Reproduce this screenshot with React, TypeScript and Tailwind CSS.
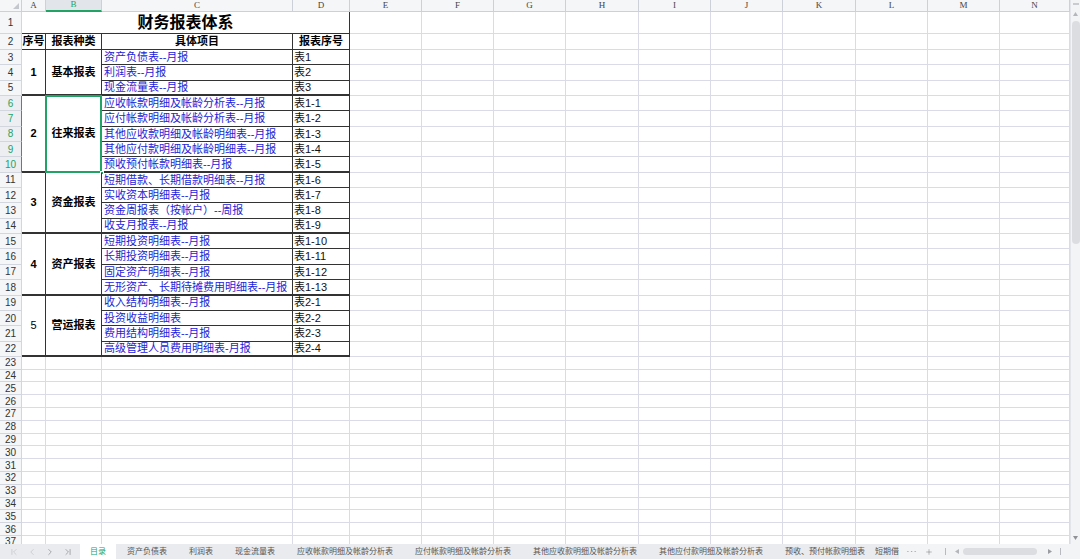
import { ChevronFirst, ChevronLast, ChevronLeft, ChevronRight, Plus } from "lucide-react";

const COLS = ["A", "B", "C", "D", "E", "F", "G", "H", "I", "J", "K", "L", "M", "N"];
const EMPTY = COLS.slice(4);

type Group = {
  num: string;
  name: string;
  numBold: boolean;
  span: string;
  items: [string, string][];
};

const GROUPS: Group[] = [
  {
    num: "1",
    name: "基本报表",
    numBold: true,
    span: "row-span-3",
    items: [
      ["资产负债表--月报", "表1"],
      ["利润表--月报", "表2"],
      ["现金流量表--月报", "表3"],
    ],
  },
  {
    num: "2",
    name: "往来报表",
    numBold: true,
    span: "row-span-5",
    items: [
      ["应收帐款明细及帐龄分析表--月报", "表1-1"],
      ["应付帐款明细及帐龄分析表--月报", "表1-2"],
      ["其他应收款明细及帐龄明细表--月报", "表1-3"],
      ["其他应付款明细及帐龄明细表--月报", "表1-4"],
      ["预收预付帐款明细表--月报", "表1-5"],
    ],
  },
  {
    num: "3",
    name: "资金报表",
    numBold: true,
    span: "row-span-4",
    items: [
      ["短期借款、长期借款明细表--月报", "表1-6"],
      ["实收资本明细表--月报", "表1-7"],
      ["资金周报表（按帐户）--周报", "表1-8"],
      ["收支月报表--月报", "表1-9"],
    ],
  },
  {
    num: "4",
    name: "资产报表",
    numBold: true,
    span: "row-span-4",
    items: [
      ["短期投资明细表--月报", "表1-10"],
      ["长期投资明细表--月报", "表1-11"],
      ["固定资产明细表--月报", "表1-12"],
      ["无形资产、长期待摊费用明细表--月报", "表1-13"],
    ],
  },
  {
    num: "5",
    name: "营运报表",
    numBold: false,
    span: "row-span-4",
    items: [
      ["收入结构明细表--月报", "表2-1"],
      ["投资收益明细表", "表2-2"],
      ["费用结构明细表--月报", "表2-3"],
      ["高级管理人员费用明细表-月报", "表2-4"],
    ],
  },
];

const TABS = [
  "资产负债表",
  "利润表",
  "现金流量表",
  "应收帐款明细及帐龄分析表",
  "应付帐款明细及帐龄分析表",
  "其他应收款明细及帐龄分析表",
  "其他应付款明细及帐龄分析表",
];

const light = "border-r border-b border-[#d9dce6]";
const dark = "border-r border-b border-[#333]";

function RowHead({ n, selected }: { n: number; selected?: boolean }) {
  return (
    <div
      className={
        selected
          ? "flex items-center justify-center bg-[#eceef1] border-r border-r-[#21a366] border-b border-b-[#d3d6df] text-[10px] text-[#21a366]"
          : "flex items-center justify-center bg-[#f5f6f8] border-r border-b border-[#d3d6df] text-[10px] text-[#333]"
      }
    >
      {n}
    </div>
  );
}

function Sheet() {
  const cells: React.ReactNode[] = [];

  // column header row
  cells.push(
    <div key="corner" className="relative bg-[#f5f6f8] border-r border-b border-[#cdd0d9]">
      <svg className="absolute right-[2px] bottom-[2px]" width="6" height="6" viewBox="0 0 6 6">
        <polygon points="6,0 6,6 0,6" fill="#c4c7cd" />
      </svg>
    </div>
  );
  COLS.forEach((c) =>
    cells.push(
      <div
        key={"h" + c}
        className={
          c === "B"
            ? "flex items-center justify-center bg-[#e2e5ea] border-r border-r-[#cdd0d9] border-b-2 border-b-[#21a366] font-['Liberation_Serif',serif] text-[9px] text-[#21a366]"
            : "flex items-center justify-center bg-[#f5f6f8] border-r border-b border-[#cdd0d9] font-['Liberation_Serif',serif] text-[9px] text-[#444]"
        }
      >
        {c}
      </div>
    )
  );

  // row 1: title
  cells.push(<RowHead key="r1" n={1} />);
  cells.push(
    <div
      key="title"
      className="col-span-4 flex items-center justify-center border-r border-b border-[#333] text-[16px] font-bold text-black"
    >
      财务报表体系
    </div>
  );
  EMPTY.forEach((c) => cells.push(<div key={"1" + c} className={light} />));

  // row 2: headings
  cells.push(<RowHead key="r2" n={2} />);
  ["序号", "报表种类", "具体项目", "报表序号"].forEach((t) =>
    cells.push(
      <div key={"2" + t} className={"flex items-center justify-center text-[11px] font-bold text-black " + dark}>
        {t}
      </div>
    )
  );
  EMPTY.forEach((c) => cells.push(<div key={"2" + c} className={light} />));

  // rows 3-22
  let r = 3;
  GROUPS.forEach((g, gi) => {
    g.items.forEach(([item, code], ii) => {
      const last = ii === g.items.length - 1;
      const sel = gi === 1;
      cells.push(<RowHead key={"r" + r} n={r} selected={sel} />);
      if (ii === 0) {
        cells.push(
          <div
            key={"a" + r}
            className={
              "flex items-center justify-center border-r border-b-2 border-[#333] text-[11px] text-black " +
              g.span +
              (g.numBold ? " font-bold" : "")
            }
          >
            {g.num}
          </div>
        );
        cells.push(
          <div
            key={"b" + r}
            className={
              "relative flex items-center justify-center border-r border-b-2 border-[#333] text-[11px] font-bold text-black " +
              g.span
            }
          >
            {g.name}
            {sel && (
              <>
                <div className="absolute -left-px -top-px -right-px -bottom-[2px] border-2 border-[#21a366]" />
                <div className="absolute -right-[3px] -bottom-[4px] w-[4px] h-[4px] bg-[#21a366] border border-white" />
              </>
            )}
          </div>
        );
      }
      const bb = last ? " border-b-2" : " border-b";
      cells.push(
        <div
          key={"c" + r}
          className={
            "flex items-center overflow-hidden whitespace-nowrap pl-[2px] border-r border-[#333] text-[11px] text-[#2424d6]" +
            bb
          }
        >
          {item}
        </div>
      );
      cells.push(
        <div
          key={"d" + r}
          className={
            "flex items-center overflow-hidden whitespace-nowrap pl-[1px] border-r border-[#333] text-[11px] text-[#111]" +
            bb
          }
        >
          {code}
        </div>
      );
      EMPTY.forEach((c) => cells.push(<div key={r + c} className={light} />));
      r++;
    });
  });

  // rows 23-37
  for (let n = 23; n <= 37; n++) {
    cells.push(<RowHead key={"r" + n} n={n} />);
    COLS.forEach((c) => cells.push(<div key={n + c} className={light} />));
  }

  return (
    <div className="grid w-[1070px] h-[544px] overflow-hidden content-start grid-cols-[22px_24px_56px_191px_57px_72px_72px_72px_73px_72px_72px_73px_72px_72px_70px] grid-rows-[12px_22px_16px_repeat(20,15.35px)_repeat(15,12.8px)]">
      {cells}
    </div>
  );
}

function VScroll() {
  return (
    <div className="flex flex-col items-center w-[10px] h-[544px] bg-[#f3f4f6] border-l border-[#e3e5ea]">
      <div className="mt-[3px] w-[6px] h-[2px] bg-[#c9cbd0]" />
      <svg className="mt-[7px]" width="5" height="4" viewBox="0 0 5 4">
        <polygon points="2.5,0 5,4 0,4" fill="#b4b6bb" />
      </svg>
      <div className="mt-[5px] w-[8px] h-[223px] rounded-full bg-[#dcdde1]" />
      <div className="flex-1" />
      <svg className="mb-[4px]" width="5" height="4" viewBox="0 0 5 4">
        <polygon points="0,0 5,0 2.5,4" fill="#8f9196" />
      </svg>
    </div>
  );
}

function TabBar() {
  return (
    <div className="flex h-[15px] bg-[#eaebee] text-[8px] text-[#555] leading-none">
      <div className="flex items-center w-[80px] pl-[9px] gap-[8px]">
        <ChevronFirst size={10} strokeWidth={1.3} className="text-[#b5b7bc]" />
        <ChevronLeft size={10} strokeWidth={1.3} className="text-[#b5b7bc]" />
        <ChevronRight size={10} strokeWidth={1.3} className="text-[#6b6d72]" />
        <ChevronLast size={10} strokeWidth={1.3} className="text-[#6b6d72]" />
      </div>
      <div className="flex w-[819px] overflow-hidden">
        <div className="flex shrink-0 items-center px-[10px] bg-white text-[#21a366]">目录</div>
        {TABS.map((t) => (
          <div key={t} className="flex shrink-0 items-center px-[11px] whitespace-nowrap">
            {t}
          </div>
        ))}
        <div className="flex shrink-0 items-center pl-[11px] pr-[5px] whitespace-nowrap">预收、预付帐款明细表</div>
        <div className="flex shrink-0 items-center pl-[5px] whitespace-nowrap">短期借款、长期借款明细表</div>
      </div>
      <div className="flex flex-1 items-center bg-[#f3f4f6]">
        <div className="flex w-[26px] justify-center text-[#666] tracking-[1px]">···</div>
        <div className="flex w-[8px] justify-center">
          <Plus size={10} strokeWidth={1.2} className="text-[#555]" />
        </div>
        <div className="w-[12px]" />
        <div className="w-[1px] h-[7px] bg-[#b8babf]" />
        <div className="w-[9px]" />
        <svg width="4" height="5" viewBox="0 0 4 5">
          <polygon points="4,0 4,5 0,2.5" fill="#b4b6bb" />
        </svg>
        <div className="w-[4px]" />
        <div className="w-[74px] h-[7px] rounded-full bg-[#dcdde1]" />
        <div className="w-[11px]" />
        <svg width="4" height="5" viewBox="0 0 4 5">
          <polygon points="0,0 4,2.5 0,5" fill="#9a9ca1" />
        </svg>
        <div className="w-[8px]" />
        <div className="w-[1px] h-[7px] bg-[#b8babf]" />
      </div>
    </div>
  );
}

export default function App() {
  return (
    <div className="flex flex-col w-[1080px] h-[559px] overflow-hidden bg-white font-['Liberation_Sans','Noto_Sans_CJK_SC',sans-serif]">
      <div className="flex h-[544px]">
        <Sheet />
        <VScroll />
      </div>
      <TabBar />
    </div>
  );
}
